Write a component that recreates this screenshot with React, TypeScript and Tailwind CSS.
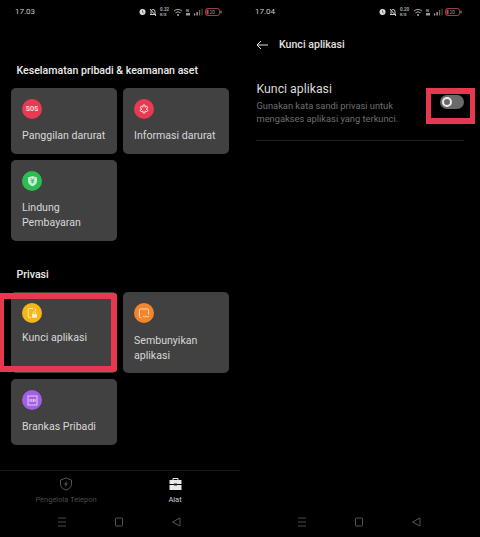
import React from "react";

const font = { fontFamily: "Roboto, 'Liberation Sans', sans-serif" };

function StatusBar({ time, speed }: { time: string; speed: string }) {
  return (
    <div className="flex h-[22px] items-center justify-between pl-[15px] pr-[17px]">
      <span className="text-[8px] leading-none text-[#c8c8c8]">{time}</span>
      <svg width="84" height="10" viewBox="0 0 84 10" fill="none">
        <circle cx="3.5" cy="5" r="3" fill="#ddd" />
        <path d="M3.5 3.5V5.2L4.6 5.8" stroke="#222" strokeWidth="0.7" />
        <path d="M11 7.5h6M12 7.5V4.5a2 2 0 0 1 4 0v3M11 2l6 7" stroke="#ccc" strokeWidth="1" />
        <text x="21" y="4.4" fontSize="4.5" fontWeight="700" fill="#aaa">{speed}</text>
        <text x="21" y="9" fontSize="4" fontWeight="700" fill="#aaa">K/S</text>
        <path d="M35 4a6 6 0 0 1 8 0M36.5 5.8a4 4 0 0 1 5 0" stroke="#bbb" strokeWidth="0.9" />
        <circle cx="39" cy="8" r="0.9" fill="#bbb" />
        <text x="47" y="5" fontSize="4" fontWeight="700" fill="#aaa">N</text>
        <rect x="47" y="6" width="4" height="2.5" fill="#999" />
        <rect x="55" y="6.5" width="1.2" height="2" fill="#bbb" />
        <rect x="57.5" y="5" width="1.2" height="3.5" fill="#bbb" />
        <rect x="60" y="3" width="1.2" height="5.5" fill="#666" />
        <rect x="62.5" y="1.5" width="1.2" height="7" fill="#444" />
        <rect x="66.5" y="1.5" width="14" height="7" rx="2" stroke="#b9505c" strokeWidth="0.8" />
        <rect x="67.5" y="2.5" width="2" height="5" fill="#d93a4e" />
        <text x="70.5" y="7" fontSize="5" fill="#999">20</text>
        <rect x="81.5" y="3.5" width="1" height="3" fill="#999" />
      </svg>
    </div>
  );
}

function NavKeys() {
  return (
    <div className="flex h-[28px] items-start justify-center gap-[47px] pr-[2px] pt-[8px]">
      <svg width="10" height="10" viewBox="0 0 10 10" fill="none" stroke="#4a4a4a" strokeWidth="1">
        <path d="M1 1h8M1 5h8M1 9h8" />
      </svg>
      <svg width="10" height="10" viewBox="0 0 10 10" fill="none" stroke="#555" strokeWidth="1">
        <rect x="1.5" y="1" width="7" height="8" rx="1" />
      </svg>
      <svg width="10" height="10" viewBox="0 0 10 10" fill="none" stroke="#555" strokeWidth="1">
        <path d="M9 1v8L1.5 5z" />
      </svg>
    </div>
  );
}

function Circle({ color, children }: { color: string; children: React.ReactNode }) {
  return (
    <div className="flex h-5 w-5 items-center justify-center rounded-full" style={{ backgroundColor: color }}>
      {children}
    </div>
  );
}

function Card({
  icon,
  lines,
  tall,
  gap = "mt-[9px]",
}: {
  icon: React.ReactNode;
  lines: string[];
  tall?: boolean;
  gap?: string;
}) {
  return (
    <div className={`rounded-[5px] bg-[#414141] pl-[11px] pt-[11px] ${tall ? "h-[81px]" : "h-[66px]"}`}>
      {icon}
      <div className={`${gap} text-[10.6px] leading-[15px] text-[#d8d8d8]`}>
        {lines.map((l) => (
          <div key={l}>{l}</div>
        ))}
      </div>
    </div>
  );
}

function Heading({ children, className }: { children: React.ReactNode; className: string }) {
  return <div className={`pl-[16.5px] text-[10.6px] font-medium leading-[14px] text-[#ececec] ${className}`}>{children}</div>;
}

const iconSos = (
  <Circle color="#e83a50">
    <span className="text-[6.5px] font-bold leading-none text-[#fbe3e6]">SOS</span>
  </Circle>
);
const iconInfo = (
  <Circle color="#e83a50">
    <svg width="10" height="10" viewBox="0 0 10 10" fill="none" stroke="#f5d5da" strokeWidth="1">
      <path d="M4 1h2v2.2L8 2.2l1 1.6-2 1.2 2 1.2-1 1.6-2-1V9H4V6.8l-2 1-1-1.6L3 5 1 3.8l1-1.6 2 1z" />
    </svg>
  </Circle>
);
const iconShield = (
  <Circle color="#2ebc55">
    <svg width="11" height="12" viewBox="0 0 11 12" fill="none">
      <path d="M5.5 1 10 2.5v4c0 2.3-2 3.8-4.500 4.700C3 10.300 1 8.800 1 6.500v-4z" fill="#c9edd3" />
      <path d="M3.800 3.200 5.500 5.200l1.700-2M3.800 5.500h3.400M3.800 7h3.400M5.500 5v3.500" stroke="#2ebc55" strokeWidth="0.8" />
    </svg>
  </Circle>
);
const iconLock = (
  <Circle color="#f6b616">
    <svg width="11" height="12" viewBox="0 0 11 12" fill="none">
      <path d="M6 1.500H2a.8.8 0 0 0-.8.800v7.500a.8.800 0 0 0 .8.800h2M8.500 4V2.300A.8.800 0 0 0 7.700 1.500" stroke="#fdeec6" strokeWidth="0.9" />
      <rect x="5" y="7" width="5" height="3.800" rx="0.6" fill="#fdeec6" />
      <path d="M6.200 7V6a1.300 1.300 0 0 1 2.600 0v1" stroke="#fdeec6" strokeWidth="0.8" />
    </svg>
  </Circle>
);
const iconHide = (
  <Circle color="#f5842c">
    <svg width="12" height="11" viewBox="0 0 12 11" fill="none" stroke="#fde3cf" strokeWidth="0.9">
      <path d="M3.500 9.500H2.200a.8.800 0 0 1-.8-.8V1.800a.8.800 0 0 1 .8-.8h7.600a.8.800 0 0 1 .8.800v4.700" />
      <path d="M5 8l1.500 1 1.500-1 1.500 1L11 8" />
    </svg>
  </Circle>
);
const iconSafe = (
  <Circle color="#a25fe6">
    <svg width="11" height="11" viewBox="0 0 11 11" fill="none">
      <rect x="1" y="1" width="9" height="9" stroke="#e9d9fa" strokeWidth="0.9" />
      <path d="M3 4v3M4.800 4v3M6.500 4v3M8 4v3" stroke="#e9d9fa" strokeWidth="0.9" />
    </svg>
  </Circle>
);

function TabBar() {
  return (
    <div className="flex h-[39px] border-t border-[#1c1c1c]">
      <div className="flex w-[132px] flex-col items-center pt-[6px]">
        <svg width="14" height="14" viewBox="0 0 14 14" fill="none">
          <path d="M7 1 12.500 3v4.500C12.500 10.300 10 12 7 13 4 12 1.500 10.300 1.500 7.500V3z" stroke="#555" strokeWidth="1" />
          <path d="M7.800 3.800 5.200 7.500h1.600l-.6 2.700 2.600-3.700H7.200z" fill="#5e5e5e" />
        </svg>
        <span className="mt-[4px] text-[7.500px] leading-[9px] text-[#4b4b4b]">Pengelola Telepon</span>
      </div>
      <div className="flex flex-1 flex-col items-center pr-[22px] pt-[6px]">
        <svg width="13" height="14" viewBox="0 0 13 14" fill="none">
          <path d="M4 3V1.500h5V3" stroke="#e8e8e8" strokeWidth="1" />
          <rect x="0.500" y="3" width="12" height="4" fill="#e8e8e8" />
          <rect x="0.500" y="8" width="12" height="5" fill="#e8e8e8" />
          <rect x="5" y="6.500" width="3" height="2" fill="#222" />
        </svg>
        <span className="mt-[4px] text-[7.500px] leading-[9px] text-[#d0d0d0]">Alat</span>
      </div>
    </div>
  );
}

function LeftPhone() {
  return (
    <div className="relative flex h-[537px] w-[240px] flex-col">
      <div className="pt-px">
        <StatusBar time="17.03" speed="0.32" />
      </div>
      <Heading className="mt-[41px]">Keselamatan pribadi &amp; keamanan aset</Heading>
      <div className="mt-[10px] grid grid-cols-[106px_106px] gap-[6px] pl-[11px]">
        <Card icon={iconSos} lines={["Panggilan darurat"]} />
        <Card icon={iconInfo} lines={["Informasi darurat"]} />
        <Card icon={iconShield} lines={["Lindung", "Pembayaran"]} tall />
      </div>
      <Heading className="mt-[27px]">Privasi</Heading>
      <div className="mt-[10px] grid grid-cols-[106px_106px] gap-[6px] pl-[11px]">
        <Card icon={iconLock} lines={["Kunci aplikasi"]} tall gap="mt-[7px]" />
        <Card icon={iconHide} lines={["Sembunyikan", "aplikasi"]} tall gap="mt-[10px]" />
        <Card icon={iconSafe} lines={["Brankas Pribadi"]} />
      </div>
      <div className="mt-[25px]">
        <TabBar />
      </div>
      <NavKeys />
      <div className="absolute left-0 top-[293px] h-[79px] w-[117px] rounded-r-[3px] border-y-[6px] border-l-[4px] border-r-[6px] border-[#e63950]" />
    </div>
  );
}

function RightPhone() {
  return (
    <div className="relative flex h-[537px] w-[240px] flex-col">
      <div className="pt-px">
        <StatusBar time="17.04" speed="0.20" />
      </div>
      <div className="mt-[14px] flex h-[16px] items-center pl-[16px]">
        <svg width="12" height="10" viewBox="0 0 12 10" fill="none" stroke="#ddd" strokeWidth="1">
          <path d="M12 5H1M5 1 1 5l4 4" />
        </svg>
        <span className="ml-[11px] text-[10.600px] font-medium leading-none text-[#e0e0e0]">Kunci aplikasi</span>
      </div>
      <div className="mt-[28px] flex w-[224px] items-start justify-between pl-[16.500px]">
        <div>
          <div className="text-[12.300px] leading-[16px] text-[#dcdcdc]">Kunci aplikasi</div>
          <div className="mt-[2px] text-[9.300px] leading-[13px] text-[#6f6f6f]">
            Gunakan kata sandi privasi untuk
            <br />
            mengakses aplikasi yang terkunci.
          </div>
        </div>
        <div className="mt-[14px] flex h-[14px] w-[24px] items-center rounded-full bg-[#6a6a6a] pl-[2px]">
          <div className="h-[10px] w-[10px] rounded-full border-[2.500px] border-[#eeeeee]" />
        </div>
      </div>
      <div className="ml-[16px] mt-[15px] h-px w-[208px] bg-[#222222]" />
      <div className="flex-1" />
      <NavKeys />
      <div className="absolute left-[186px] top-[88px] h-[36px] w-[49px] border-x-[5px] border-y-[6px] border-[#e63950]" />
    </div>
  );
}

export default function App() {
  return (
    <div className="flex h-[537px] w-[480px] bg-black" style={font}>
      <LeftPhone />
      <RightPhone />
    </div>
  );
}
